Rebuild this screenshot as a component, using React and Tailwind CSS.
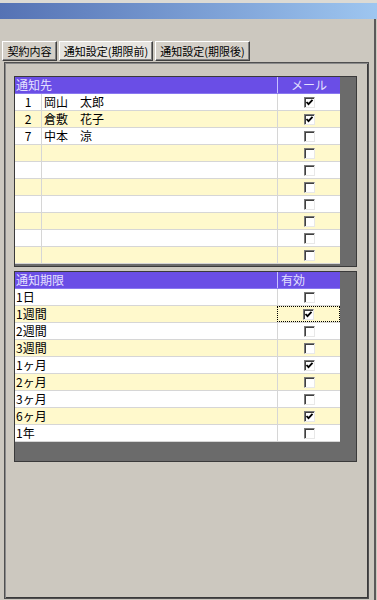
import React from "react";

const font = { fontFamily: '"Noto Sans CJK JP", "Noto Sans", sans-serif' };

function Check({ checked }) {
  return (
    <div className="w-[11px] h-[11px] bg-white border border-t-[#7a7a7a] border-l-[#7a7a7a] border-r-[#e8e8e8] border-b-[#e8e8e8] shadow-[inset_1px_1px_0_#404040] flex items-center justify-center">
      {checked && (
        <svg width="9" height="9" viewBox="0 0 9 9">
          <path d="M1.5 4 L3.5 6.2 L7.5 1.8" stroke="#000" strokeWidth="1.8" fill="none" />
        </svg>
      )}
    </div>
  );
}

function Tab({ label, active, w }) {
  return (
    <div
      className={
        "h-[20px] flex items-center justify-center whitespace-nowrap text-[11px] leading-none text-black border border-t-white border-l-white border-r-[#404040] border-b-[#404040] shadow-[inset_-1px_-1px_0_#808080] " +
        w +
        (active ? " bg-[#e6e4df]" : " bg-[#d4d0c8]")
      }
    >
      {label}
    </div>
  );
}

function Grid1() {
  const rows = [
    ["1", "岡山　太郎", true],
    ["2", "倉敷　花子", true],
    ["7", "中本　涼", false],
    ["", "", false],
    ["", "", false],
    ["", "", false],
    ["", "", false],
    ["", "", false],
    ["", "", false],
    ["", "", false],
  ];
  return (
    <div className="w-[343px] h-[191px] border border-[#3a3a3a] bg-[#6b6b6b] flex flex-col">
      <div className="w-[325px] h-[17px] bg-[#6a4ee6] flex text-[12px] leading-none text-[#e4e0ff] border-b border-[#8a78f0]">
        <div className="w-[262px] pl-[1px] flex items-center">通知先</div>
        <div className="w-[63px] border-l border-[#c8c0ff] flex items-center justify-center">メール</div>
      </div>
      {rows.map((r, i) => (
        <div
          key={i}
          className={
            "w-[325px] h-[17px] flex text-[12px] leading-none text-black border-b border-[#d6d6d6] " +
            (i % 2 === 1 ? "bg-[#fff9cc]" : "bg-white")
          }
        >
          <div className="w-[27px] border-r border-[#d6d6d6] flex items-center justify-center">{r[0]}</div>
          <div className="w-[235px] pl-[2px] flex items-center">{r[1]}</div>
          <div className="w-[63px] border-l border-[#d6d6d6] flex items-center justify-center">
            <Check checked={r[2]} />
          </div>
        </div>
      ))}
    </div>
  );
}

function Grid2() {
  const rows = [
    ["1日", false],
    ["1週間", true, true],
    ["2週間", false],
    ["3週間", false],
    ["1ヶ月", true],
    ["2ヶ月", false],
    ["3ヶ月", false],
    ["6ヶ月", true],
    ["1年", false],
  ];
  return (
    <div className="w-[343px] h-[191px] border border-[#3a3a3a] bg-[#6b6b6b] flex flex-col">
      <div className="w-[325px] h-[17px] bg-[#6a4ee6] flex text-[12px] leading-none text-[#e4e0ff] border-b border-[#8a78f0]">
        <div className="w-[262px] pl-[1px] flex items-center">通知期限</div>
        <div className="w-[63px] pl-[3px] border-l border-[#c8c0ff] flex items-center">有効</div>
      </div>
      {rows.map((r, i) => (
        <div
          key={i}
          className={
            "w-[325px] h-[17px] flex text-[12px] leading-none text-black border-b border-[#d6d6d6] " +
            (i % 2 === 1 ? "bg-[#fff9cc]" : "bg-white")
          }
        >
          <div className="w-[262px] pl-[1px] flex items-center">{r[0]}</div>
          <div
            className={
              "w-[63px] flex items-center justify-center " +
              (r[2] ? "border border-dotted border-black" : "border-l border-[#d6d6d6]")
            }
          >
            <Check checked={r[1]} />
          </div>
        </div>
      ))}
    </div>
  );
}

export default function App() {
  return (
    <div style={font} className="w-[377px] h-[600px] bg-[#ccc8bf] flex flex-col overflow-hidden">
      <div className="h-[3px] bg-[#dcdad4]" />
      <div className="h-[16px] bg-gradient-to-r from-[#5572b4] to-[#9ec6f0]" />
      <div className="flex-1 flex">
        <div className="w-[374px] flex flex-col">
          <div className="pt-[22px] pl-[2px] flex gap-[2px]">
            <Tab label="契約内容" w="w-[55px]" />
            <Tab label="通知設定(期限前)" w="w-[94px]" active />
            <Tab label="通知設定(期限後)" w="w-[95px]" />
          </div>
          <div className="ml-[4px] mt-[1px] w-[365px] h-[537px] border border-[#505050] shadow-[inset_1px_1px_0_#8a8a8a,inset_-1px_-1px_0_#3a3a3a] pl-[9px] pt-[13px] flex flex-col gap-[4px]">
            <Grid1 />
            <Grid2 />
          </div>
        </div>
        <div className="w-[2px] bg-[#5a5a5a]" />
        <div className="w-[1px] bg-[#ccc8bf]" />
      </div>
    </div>
  );
}
